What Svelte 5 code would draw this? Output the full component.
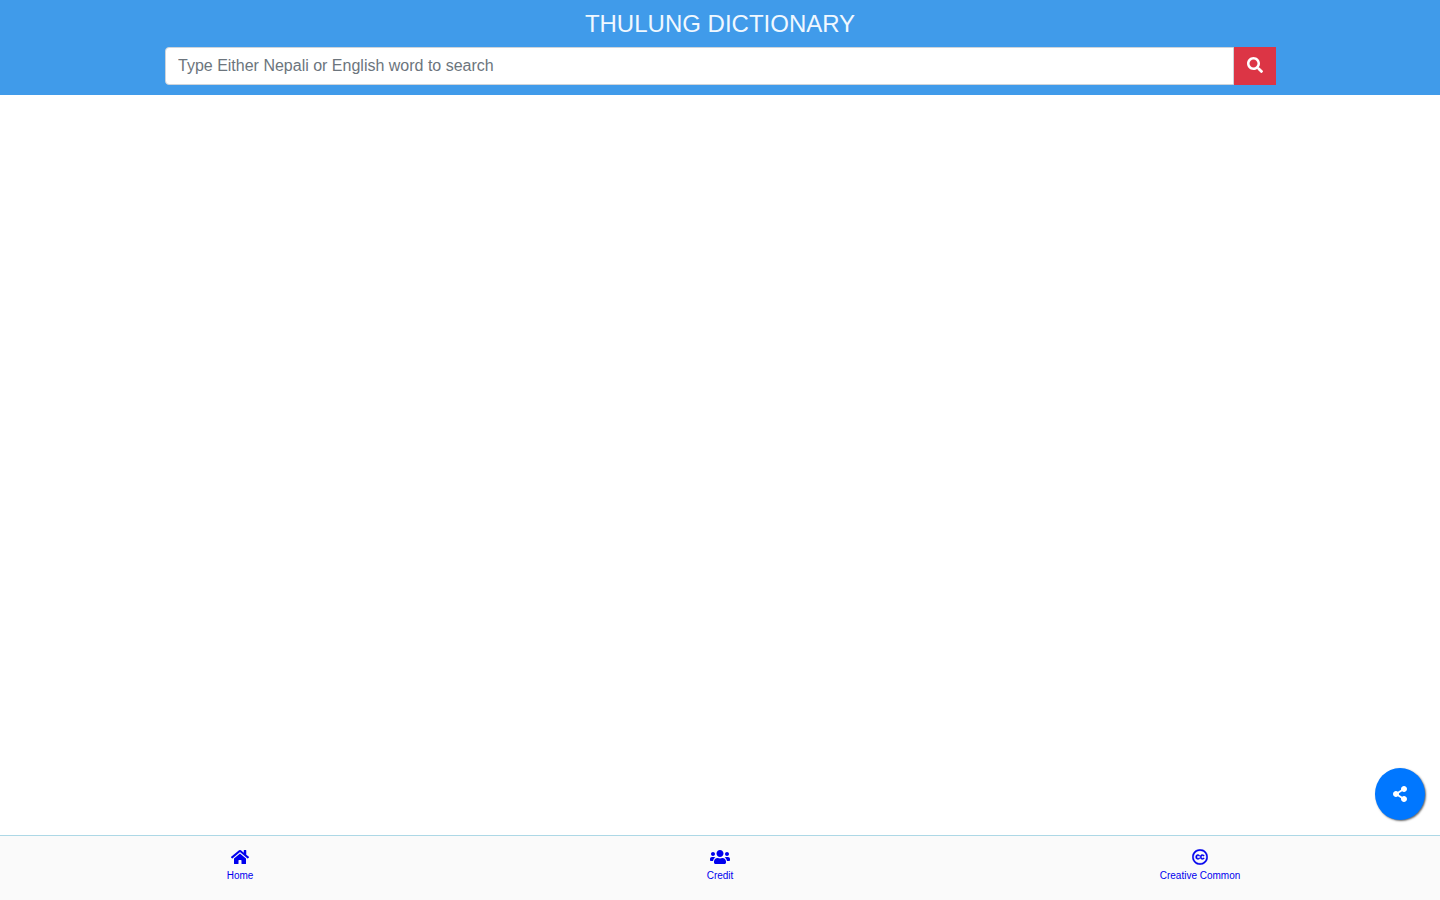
<script>
  const links = [
    {
      label: 'Home',
      viewBox: '0 0 576 512',
      width: 18,
      path: 'M280.37 148.26L96 300.11V464a16 16 0 0 0 16 16l112.06-.29a16 16 0 0 0 15.92-16V368a16 16 0 0 1 16-16h64a16 16 0 0 1 16 16v95.64a16 16 0 0 0 16 16.05L464 480a16 16 0 0 0 16-16V300L295.67 148.26a12.19 12.19 0 0 0-15.3 0zM571.6 251.47L488 182.56V44.05a12 12 0 0 0-12-12h-56a12 12 0 0 0-12 12v72.61L318.47 43a48 48 0 0 0-61 0L4.34 251.47a12 12 0 0 0-1.6 16.9l25.5 31A12 12 0 0 0 45.15 301l235.22-193.74a12.19 12.19 0 0 1 15.3 0L530.9 301a12 12 0 0 0 16.9-1.6l25.5-31a12 12 0 0 0-1.7-16.93z'
    },
    {
      label: 'Credit',
      viewBox: '0 0 640 512',
      width: 20,
      path: 'M96 224c35.300 0 64-28.700 64-64s-28.700-64-64-64-64 28.700-64 64 28.700 64 64 64zm448 0c35.300 0 64-28.700 64-64s-28.700-64-64-64-64 28.700-64 64 28.700 64 64 64zm32 32h-64c-17.600 0-33.500 7.100-45.100 18.600 40.300 22.100 68.900 62 75.100 109.400h66c17.700 0 32-14.300 32-32v-32c0-35.300-28.700-64-64-64zm-256 0c61.900 0 112-50.100 112-112S381.900 32 320 32 208 82.100 208 144s50.100 112 112 112zm76.800 32h-8.300c-20.800 10-43.900 16-68.500 16s-47.600-6-68.500-16h-8.300C179.600 288 128 339.600 128 403.200V432c0 26.500 21.500 48 48 48h288c26.500 0 48-21.500 48-48v-28.800c0-63.600-51.600-115.200-115.200-115.200zm-223.700-13.400C161.500 263.100 145.600 256 128 256H64c-35.300 0-64 28.700-64 64v32c0 17.700 14.300 32 32 32h65.900c6.300-47.400 34.900-87.300 75.200-109.400z'
    },
    {
      label: 'Creative Common',
      viewBox: '0 0 496 512',
      width: 16,
      stroke: 12,
      path: 'M245.830 214.870l-33.220 17.280c-9.430-19.580-25.240-19.930-27.460-19.930-22.130 0-33.220 14.610-33.220 43.840 0 23.570 9.210 43.840 33.220 43.840 14.470 0 24.650-7.090 30.570-21.260l30.550 15.500c-6.170 11.510-25.690 38.980-65.100 38.980-22.600 0-73.960-10.320-73.960-77.050 0-58.690 43-77.060 72.630-77.060 30.720-.01 52.700 11.950 65.990 35.860zm143.050 0l-32.780 17.280c-9.500-19.770-25.720-19.930-27.900-19.930-22.140 0-33.220 14.610-33.220 43.840 0 23.550 9.230 43.840 33.220 43.840 14.450 0 24.650-7.090 30.540-21.260l31 15.500c-2.100 3.750-21.390 38.980-65.090 38.980-22.690 0-73.960-9.870-73.960-77.050 0-58.670 42.970-77.060 72.630-77.060 30.710-.01 52.580 11.950 65.560 35.860zM247.560 8.050C104.740 8.050 0 123.110 0 256.050c0 138.490 113.600 248 247.560 248 129.930 0 248.440-100.870 248.440-248 0-137.870-106.620-248-248.440-248zm.87 450.810c-112.540 0-203.700-93.040-203.700-202.810 0-105.420 85.430-203.270 203.720-203.270 112.530 0 202.820 89.460 202.820 203.260-.01 121.690-99.680 202.820-202.840 202.820z'
    }
  ];
</script>

<div class="page">
  <header>
    <h1>THULUNG DICTIONARY</h1>
    <form class="search" role="search" onsubmit={(e) => e.preventDefault()}>
      <input type="text" aria-label="Search word" placeholder="Type Either Nepali or English word to search" />
      <button type="submit" aria-label="Search">
        <svg viewBox="0 0 512 512" width="16" height="16" aria-hidden="true"><path d="M505 442.700L405.300 343c-4.500-4.500-10.600-7-17-7H372c27.600-35.300 44-79.700 44-128C416 93.100 322.900 0 208 0S0 93.100 0 208s93.100 208 208 208c48.300 0 92.700-16.400 128-44v16.300c0 6.400 2.500 12.500 7 17l99.700 99.700c9.400 9.400 24.600 9.400 33.900 0l28.300-28.300c9.400-9.400 9.400-24.600.1-34zM208 336c-70.700 0-128-57.200-128-128 0-70.700 57.200-128 128-128 70.700 0 128 57.200 128 128 0 70.700-57.200 128-128 128z" /></svg>
      </button>
    </form>
  </header>

  <main></main>

  <button class="share" type="button" aria-label="Share">
    <svg viewBox="0 0 448 512" width="14" height="16" aria-hidden="true"><path d="M352 320c-22.608 0-43.387 7.819-59.790 20.895l-102.486-64.054a96.551 96.551 0 0 0 0-41.683l102.486-64.054C308.613 184.181 329.392 192 352 192c53.019 0 96-42.981 96-96S405.019 0 352 0s-96 42.981-96 96c0 7.158.790 14.130 2.276 20.841L155.790 180.895C139.387 167.819 118.608 160 96 160c-53.019 0-96 42.981-96 96s42.981 96 96 96c22.608 0 43.387-7.819 59.790-20.895l102.486 64.054A96.301 96.301 0 0 0 256 416c0 53.019 42.981 96 96 96s96-42.981 96-96-42.981-96-96-96z" /></svg>
  </button>

  <nav>
    {#each links as link}
      <a href="#{link.label.toLowerCase().replace(' ', '-')}">
        <svg viewBox={link.viewBox} width={link.width} height="16" aria-hidden="true"><path d={link.path} stroke="currentColor" stroke-width={link.stroke ?? 0} /></svg>
        <span>{link.label}</span>
      </a>
    {/each}
  </nav>
</div>

<style>
  :global(body) {
    margin: 0;
    background: #fff;
  }
  .page {
    display: flex;
    flex-direction: column;
    min-height: 100vh;
    font-family: "Liberation Sans", Arial, sans-serif;
  }
  .page * {
    box-sizing: border-box;
  }
  svg {
    display: block;
    fill: currentColor;
  }
  header {
    padding: 10px 15px;
    background: #409bea;
  }
  h1 {
    margin: 0 0 10px;
    color: aliceblue;
    font-size: 24px;
    font-weight: 400;
    line-height: 27px;
    text-align: center;
  }
  .search {
    display: flex;
    max-width: 1110px;
    margin: 0 auto;
  }
  input {
    flex: 1;
    min-width: 0;
    height: 38px;
    padding: 6px 12px;
    border: 1px solid #ced4da;
    border-radius: 4px 0 0 4px;
    background: #fff;
    color: #495057;
    font: 16px/24px "Liberation Sans", Arial, sans-serif;
  }
  input::placeholder {
    color: #6c757d;
    opacity: 1;
  }
  .search button {
    display: grid;
    place-items: center;
    width: 42px;
    margin-right: -1px;
    padding: 0 0 2px;
    border: 0;
    background: #dc3545;
    color: #fff;
    cursor: pointer;
  }
  main {
    flex: 1;
  }
  .share {
    position: fixed;
    right: 15px;
    bottom: 80px;
    display: grid;
    place-items: center;
    width: 50px;
    height: 52px;
    padding: 0;
    border: 0;
    border-radius: 50%;
    background: #07f;
    box-shadow: 1px 1px 2px #666;
    color: #fff;
    cursor: pointer;
  }
  nav {
    position: sticky;
    bottom: 0;
    display: grid;
    grid-template-columns: repeat(3, 1fr);
    height: 65px;
    border-top: 1px solid lightblue;
    background: #fafafa;
  }
  a {
    display: flex;
    flex-direction: column;
    align-items: center;
    gap: 5px;
    padding-top: 13px;
    color: #00e;
    font-size: 10px;
    line-height: 12px;
    text-decoration: none;
  }
</style>
